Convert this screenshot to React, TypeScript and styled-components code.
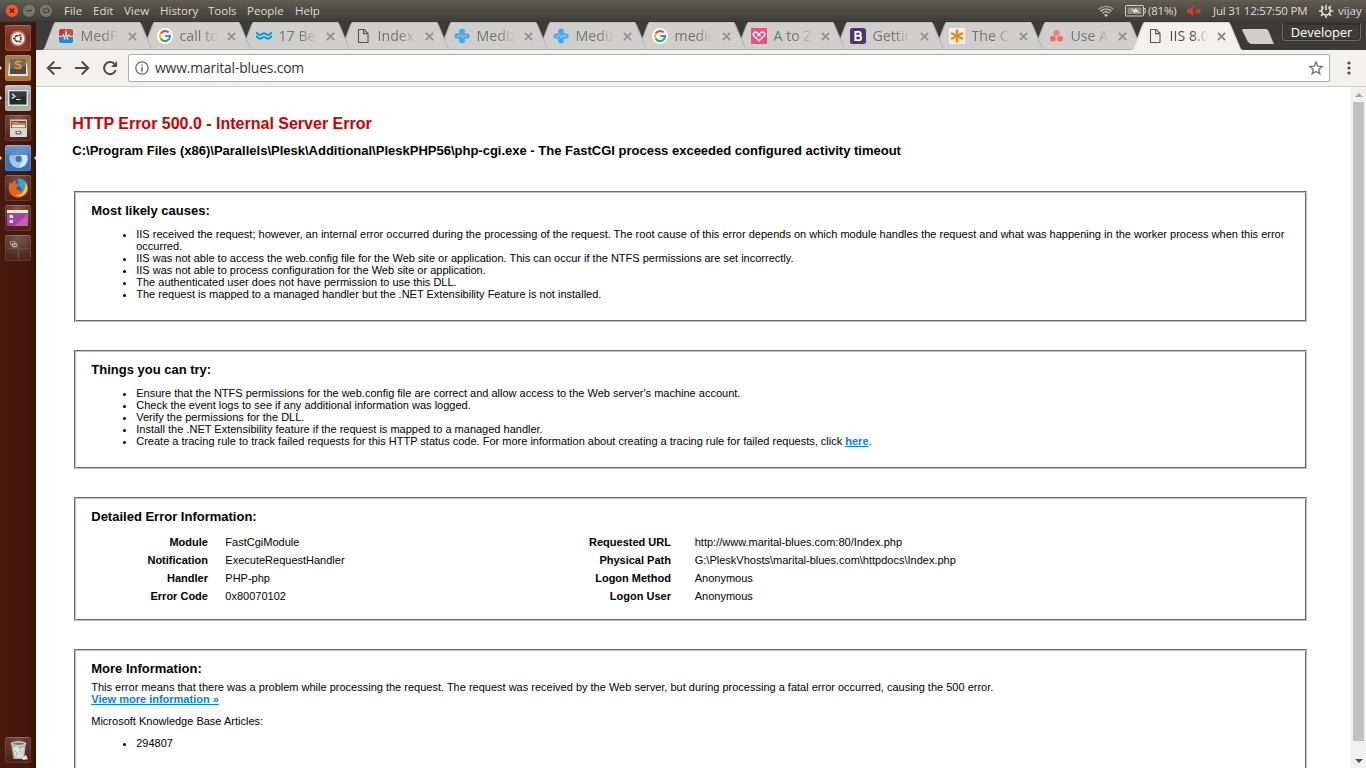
import React from "react";
import styled, { createGlobalStyle, css } from "styled-components";

const GlobalStyle = createGlobalStyle`
  html, body { margin: 0; padding: 0; overflow: hidden; }
  * { box-sizing: border-box; }
  svg { display: block; flex: none; }
`;

const uiFont = `"Open Sans", "Noto Sans", sans-serif`;

const Desktop = styled.div`
  width: 1366px;
  height: 768px;
  display: flex;
  flex-direction: column;
  overflow: hidden;
  background: #fff;
  font-family: ${uiFont};
`;

/* ---------- top panel ---------- */
const Panel = styled.header`
  height: 22px;
  flex: none;
  display: flex;
  align-items: center;
  padding-left: 5px;
  background: linear-gradient(#64614f 0, #5b5850 2px, #3e3d39 21px, #35342f 22px);
  color: #dfdbd2;
  font-size: 11.5px;
  line-height: 22px;
  white-space: nowrap;
`;
const WindowButtons = styled.div`
  display: flex;
  gap: 3px;
  width: 59px;
`;
const MenuItem = styled.span<{ $w: number }>`
  width: ${(p) => p.$w}px;
  flex: none;
`;
const Indicators = styled.div`
  margin-left: auto;
  display: flex;
  align-items: center;
  padding-right: 4px;
`;
const Status = styled.span<{ $w: number; $ml?: number; $ls?: number }>`
  width: ${(p) => p.$w}px;
  margin-left: ${(p) => p.$ml ?? 0}px;
  letter-spacing: ${(p) => p.$ls ?? 0}px;
`;
const IndicatorIcon = styled.span<{ $ml: number }>`
  margin-left: ${(p) => p.$ml}px;
`;

/* ---------- launcher ---------- */
const Workspace = styled.div`
  flex: 1;
  display: flex;
  min-height: 0;
`;
const Launcher = styled.nav`
  width: 36px;
  flex: none;
  display: flex;
  flex-direction: column;
  align-items: center;
  gap: 4px;
  padding: 3px 0 5px;
  background: linear-gradient(90deg, #471a0f, #44180e 70%, #3b130a);
`;
const Tile = styled.div<{ $bg: string; $last?: boolean }>`
  position: relative;
  width: 26px;
  height: 26px;
  flex: none;
  border-radius: 2.5px;
  background: ${(p) => p.$bg};
  box-shadow: inset 0 0 0 1px rgba(255, 255, 255, 0.1), inset 0 1px 0 rgba(255, 255, 255, 0.12);
  ${(p) => p.$last && css`margin-top: auto;`}
`;
const Pip = styled.i<{ $right?: boolean }>`
  position: absolute;
  top: 10.5px;
  border: 2.5px solid transparent;
  ${(p) =>
    p.$right
      ? css`right: -5px; border-right-color: #e6e0dd; border-left-width: 0;`
      : css`left: -5px; border-left-color: #e6e0dd; border-right-width: 0;`}
`;

/* ---------- browser chrome ---------- */
const Browser = styled.div`
  flex: 1;
  display: flex;
  flex-direction: column;
  min-width: 0;
`;
const TabStrip = styled.div`
  height: 28px;
  flex: none;
  display: flex;
  padding-left: 6px;
  background: #3c3b37;
`;
const TabShape = styled.div<{ $active?: boolean; $z: number }>`
  position: relative;
  z-index: ${(p) => p.$z};
  width: 112px;
  height: 28px;
  flex: none;
  margin-right: -13px;
  padding: 0 0 0 16px;
  display: flex;
  align-items: center;
  color: ${(p) => (p.$active ? "#4a4a48" : "#757471")};
  &::before, &::after {
    content: "";
    position: absolute;
    z-index: -1;
    inset: 0;
  }
  &::before {
    background: ${(p) => (p.$active ? "#d8d7d5" : "#b3b1af")};
    clip-path: polygon(0 100%, 2px 96%, 11px 3px, 13px 0, 98px 0, 100px 3px, 110px 96%, 112px 100%);
  }
  &::after {
    background: ${(p) => (p.$active ? "#f2f1f0" : "#d0cfcd")};
    clip-path: ${(p) =>
      p.$active
        ? "polygon(1px 100%, 3px 96%, 12px 4px, 14px 1px, 97px 1px, 99px 4px, 109px 96%, 111px 100%)"
        : "polygon(1px 27px, 3px 26px, 12px 4px, 13px .5px, 98px .5px, 99px 4px, 108.8px 26px, 110px 27px)"};
  }
`;
const TabTitle = styled.span`
  width: 39px;
  margin: 0 8px 0 6.5px;
  overflow: hidden;
  white-space: nowrap;
  font-size: 14.2px;
  line-height: 26px;
  mask-image: linear-gradient(90deg, #000 55%, transparent 98%);
`;
const NewTab = styled.div`
  width: 33px;
  height: 15px;
  margin: 7px 0 0 12px;
  background: #d0cfcd;
  clip-path: polygon(1px 0, 24px 0, 26px 1px, 32px 15px, 9px 15px, 6px 13px, 0 1px);
`;
const ProfileButton = styled.div`
  margin: 1px 5px 0 auto;
  width: 79px;
  height: 18px;
  border: 1px solid #6d6c69;
  border-top-color: #2d2c29;
  border-radius: 0 0 4px 4px;
  box-shadow: inset 0 0 0 1px #32312e;
  color: #fff;
  font-size: 12.9px;
  line-height: 17px;
  text-align: center;
`;
const Toolbar = styled.div`
  height: 37px;
  flex: none;
  display: flex;
  align-items: center;
  padding: 0 0 0 10px;
  background: #f2f1f0;
  border-bottom: 1px solid #cecdcc;
`;
const NavIcons = styled.div`
  display: flex;
  gap: 12px;
  width: 82px;
`;
const AddressBar = styled.div`
  width: 1202px;
  height: 28px;
  flex: none;
  display: flex;
  align-items: center;
  padding: 0 5px;
  background: #fff;
  border: 1px solid #aeadac;
  border-radius: 2px;
`;
const Address = styled.span`
  flex: 1;
  margin-left: 5px;
  color: #333;
  font-size: 13.9px;
  letter-spacing: -0.18px;
  line-height: 26px;
`;
const MenuDots = styled.div`
  width: 36px;
  padding-left: 1px;
  display: flex;
  justify-content: center;
`;
const Viewport = styled.div`
  flex: 1;
  display: flex;
  min-height: 0;
`;
const ScrollTrack = styled.div`
  width: 15px;
  flex: none;
  display: flex;
  flex-direction: column;
  align-items: center;
  background: #f1f1f1;
`;
const ScrollArrow = styled.div<{ $bottom?: boolean }>`
  height: 15px;
  display: flex;
  align-items: center;
  ${(p) => p.$bottom && css`margin-top: auto;`}
`;
const ScrollThumb = styled.div`
  width: 11px;
  height: 639px;
  background: #c1c1c1;
`;

/* ---------- error page ---------- */
const Page = styled.main`
  flex: 1;
  overflow: hidden;
  padding: 27px 44px 0 36px;
  background: #fff;
  color: #000;
  font: 11px/12px "Liberation Sans", Arial, sans-serif;
`;
const ErrorTitle = styled.h2`
  margin: 0;
  padding-left: 0.3px;
  color: #cc0000;
  font-size: 16px;
  line-height: 19px;
`;
const ErrorDetail = styled.h3`
  margin: 10px 0 33px;
  padding-left: 0.3px;
  font-size: 13px;
  line-height: 15px;
`;
const Box = styled.section<{ $h: number }>`
  height: ${(p) => p.$h}px;
  margin: 0 0 28px 2px;
  padding: 11px 16px 0 16.25px;
  border: 1px solid;
  border-color: #6c6c6c #c0c0c0 #c0c0c0 #6c6c6c;
  box-shadow: inset 1px 1px 0 #c0c0c0, inset -1px -1px 0 #6c6c6c;
`;
const BoxTitle = styled.h4`
  margin: 0;
  font-size: 13px;
  line-height: 15px;
`;
const List = styled.ul`
  margin: 10px 0 0;
  padding: 0 0 0 45px;
  list-style: disc;
`;
const Link = styled.a`
  color: #007eff;
  font-weight: bold;
  text-decoration: underline;
`;
const Details = styled.div`
  display: grid;
  grid-template-columns: 117px 312px 117px 1fr;
  column-gap: 17px;
  padding-top: 9px;
  line-height: 18px;
`;
const Label = styled.b`
  padding-right: 0.3px;
  text-align: right;
`;
const Value = styled.span<{ $indent?: boolean }>`
  padding-left: ${(p) => (p.$indent ? 6.5 : 0.1)}px;
`;
const Para = styled.p<{ $mt: number }>`
  margin: ${(p) => p.$mt}px 0 0;
`;

/* ---------- icons ---------- */
const Google = () => (
  <svg width="16" height="16" viewBox="0 0 16 16">
    <circle cx="8" cy="8" r="8" fill="#fff" />
    <g fill="none" strokeWidth="2.1">
      <path d="M11.6 4.6A5 5 0 0 0 3.7 5.5" stroke="#ea4335" />
      <path d="M3.7 5.5a5 5 0 0 0 0 5" stroke="#fbbc05" />
      <path d="M3.7 10.5a5 5 0 0 0 7.5 1.4" stroke="#34a853" />
      <path d="M11.2 11.9A5 5 0 0 0 13 8H8.2" stroke="#4285f4" />
    </g>
  </svg>
);
const Doc = () => (
  <svg width="16" height="16" viewBox="0 0 16 16" fill="none" stroke="#55534f" strokeWidth="1.1">
    <path d="M3.5 1.5h5.7l3.8 3.8v9.200H3.500z" />
    <path d="M8.600 1.800V5.600H12.800" />
  </svg>
);
const Cross = () => (
  <svg width="16" height="16" viewBox="0 0 16 16">
    <g fill="#45aaf0">
      <ellipse cx="8" cy="3.6" rx="2.9" ry="3" />
      <ellipse cx="8" cy="12.4" rx="2.9" ry="3" />
      <ellipse cx="3.6" cy="8" rx="3.2" ry="2.7" />
      <ellipse cx="12.4" cy="8" rx="3.2" ry="2.7" />
      <path d="M5 5h6v6H5z" />
    </g>
    <path d="M3 8.5h2l1.5-2 2 3.5L10 7l1 1h2" fill="none" stroke="#b5d8ee" strokeWidth=".8" />
  </svg>
);
const Pulse = () => (
  <svg width="16" height="16" viewBox="0 0 16 16">
    <path d="M3 1h4.5v7.5H1V3a2 2 0 0 1 2-2z" fill="#d9342b" />
    <path d="M8 1h5a2 2 0 0 1 2 2v5.5H8z" fill="#e04434" />
    <path d="M1 8h14v5a2 2 0 0 1-2 2H3a2 2 0 0 1-2-2z" fill="#2f83c6" />
    <path d="M1 8.300h3.200l1.200-2.300 1.200 5.500L8 3.500l1.300 8L10.600 6l1.200 2.300H15" fill="none" stroke="#e8eef4" strokeWidth="1" />
  </svg>
);
const Waves = () => (
  <svg width="16" height="16" viewBox="0 0 16 16" fill="none" stroke="#139fd3" strokeWidth="2.200">
    <path d="M0 5c2.200 0 2.200 1.900 4 1.900S6 5.300 8 5.300s2.200 1.600 4 1.600S14 5 16 5" />
    <path d="M0 8.700c2.200 0 2.200 1.900 4 1.900S6 9 8 9s2.200 1.600 4 1.600 2-1.900 4-1.900" />
  </svg>
);
const Heart = () => (
  <svg width="16" height="16" viewBox="0 0 16 16">
    <path d="M0 0h16v16H0z" fill="#f04e80" />
    <path d="M6.300 8.300 9.600 5c2.500-2.400 5.600.700 3.400 3L8 12.800 3 8C.9 5.700 4 2.600 6.400 4.900l3.200 3.400" fill="none" stroke="#fff" strokeWidth="1.4" />
  </svg>
);
const BootstrapMark = () => (
  <svg width="16" height="16" viewBox="0 0 16 16">
    <rect width="16" height="16" rx="2.500" fill="#50366f" />
    <path d="M5.400 3.900h3.300c2.700 0 2.700 3.900 0 3.900H5.400zM5.400 7.800h3.500c3 0 3 4.300 0 4.300H5.400z" fill="none" stroke="#fff" strokeWidth="1.900" />
  </svg>
);
const Asterisk = () => (
  <svg width="16" height="16" viewBox="0 0 16 16">
    <path d="M0 0h16v16H0z" fill="#fdeedd" />
    <path d="M8 1.500v13M2 5l12 6M14 5 2 11" stroke="#e58a23" strokeWidth="2.400" />
  </svg>
);
const Dots = () => (
  <svg width="16" height="16" viewBox="0 0 16 16" fill="#f7686c">
    <circle cx="8.500" cy="4.900" r="3" fill="#fa7b66" />
    <circle cx="4.900" cy="10.700" r="2.900" />
    <circle cx="12.100" cy="10.700" r="2.900" />
  </svg>
);
const Close = ({ dark }: { dark?: boolean }) => (
  <svg width="9" height="9" viewBox="0 0 9 9" stroke={dark ? "#7c7b79" : "#8d8c8a"} strokeWidth="1.500">
    <path d="m.9.9 7.200 7.200M8.100.9.9 8.100" />
  </svg>
);
const WinButton = ({ kind }: { kind: "close" | "min" | "max" }) => (
  <svg width="14" height="14" viewBox="0 0 14 14" fill="none">
    <circle cx="7" cy="6.700" r="6.600" fill={kind === "close" ? "#ee5a2b" : "#77756c"} stroke="#34332e" strokeWidth=".5" />
    {kind === "close" && <path d="m4.800 4.500 4.400 4.400m0-4.400L4.800 8.900" stroke="#46200f" strokeWidth="1.200" />}
    {kind === "min" && <path d="M4.300 6.700h5.400" stroke="#3a3934" strokeWidth="1.100" />}
    {kind === "max" && <path d="M4.500 5h5v3.500h-5z" stroke="#3a3934" strokeWidth=".9" />}
  </svg>
);

const tabs = [
  { title: "MedPulse", icon: <Pulse /> },
  { title: "call to", icon: <Google /> },
  { title: "17 Best", icon: <Waves /> },
  { title: "Index", icon: <Doc /> },
  { title: "Medizo", icon: <Cross /> },
  { title: "Medizo", icon: <Cross /> },
  { title: "medic", icon: <Google /> },
  { title: "A to Z", icon: <Heart /> },
  { title: "Getting", icon: <BootstrapMark /> },
  { title: "The Co", icon: <Asterisk /> },
  { title: "Use As", icon: <Dots /> },
  { title: "IIS 8.0", icon: <Doc />, active: true },
];

const menus: [string, number][] = [
  ["File", 29], ["Edit", 31], ["View", 36], ["History", 48], ["Tools", 39], ["People", 48], ["Help", 30],
];

const causes = [
  "IIS received the request; however, an internal error occurred during the processing of the request. The root cause of this error depends on which module handles the request and what was happening in the worker process when this error occurred.",
  "IIS was not able to access the web.config file for the Web site or application. This can occur if the NTFS permissions are set incorrectly.",
  "IIS was not able to process configuration for the Web site or application.",
  "The authenticated user does not have permission to use this DLL.",
  "The request is mapped to a managed handler but the .NET Extensibility Feature is not installed.",
];
const tries = [
  "Ensure that the NTFS permissions for the web.config file are correct and allow access to the Web server's machine account.",
  "Check the event logs to see if any additional information was logged.",
  "Verify the permissions for the DLL.",
  "Install the .NET Extensibility feature if the request is mapped to a managed handler.",
];
const details = [
  ["Module", "FastCgiModule", "Requested URL", "http://www.marital-blues.com:80/Index.php"],
  ["Notification", "ExecuteRequestHandler", "Physical Path", "G:\\PleskVhosts\\marital-blues.com\\httpdocs\\Index.php"],
  ["Handler", "PHP-php", "Logon Method", "Anonymous"],
  ["Error Code", "0x80070102", "Logon User", "Anonymous"],
];

const TopPanel = () => (
  <Panel>
    <WindowButtons>
      <WinButton kind="close" />
      <WinButton kind="min" />
      <WinButton kind="max" />
    </WindowButtons>
    {menus.map(([name, w]) => (
      <MenuItem key={name} $w={w}>{name}</MenuItem>
    ))}
    <Indicators>
      <svg width="18" height="14" viewBox="0 0 18 14" fill="none" stroke="#d6d2c9" strokeWidth="1.200">
        <path d="M1.500 5.200c4.500-3.800 10.500-3.800 15 0" stroke="#a29f96" />
        <path d="M3.500 7.300c3.300-2.900 7.700-2.900 11 0M5.500 9.300c2.100-1.900 4.900-1.900 7 0" />
        <path d="M7.300 11c1-.9 2.400-.9 3.400 0L9 12.700z" fill="#d6d2c9" strokeWidth=".4" />
      </svg>
      <IndicatorIcon $ml={10}>
        <svg width="22" height="12" viewBox="0 0 22 12" fill="none" stroke="#d6d2c9">
          <rect x=".5" y=".5" width="18" height="10.500" rx="1" />
          <path d="M19 3.500h1.200v4.500H19" />
          <path d="M2.500 2.500h14v6.500h-14z" fill="#8e8c84" stroke="none" />
          <path d="m6 3 4 2.500L10.500 3l4 5.200-4-2-.5 2.600z" fill="#f3f0e8" stroke="none" />
        </svg>
      </IndicatorIcon>
      <Status $w={28} $ml={1} $ls={-0.2}>(81%)</Status>
      <IndicatorIcon $ml={10}>
        <svg width="16" height="12" viewBox="0 0 16 12">
          <path d="M1 4h2.500L7 .8v10.400L3.500 8H1z" fill="#e0362c" />
          <path d="m10 4 4.200 4.200m0-4.200L10 8.200" stroke="#d93a2f" strokeWidth="1.700" />
        </svg>
      </IndicatorIcon>
      <Status $w={95} $ml={11} $ls={-0.2}>Jul 31 12:57:50 PM</Status>
      <IndicatorIcon $ml={10}>
        <svg width="16" height="16" viewBox="0 0 16 16" fill="none" stroke="#dfdbd2">
          <path d="M5.600 4.200a4.300 4.300 0 1 0 4.800 0" strokeWidth="1.700" />
          <path d="M8 1.800v5.400" strokeWidth="1.500" />
          <path d="M3.200 3.200 4.700 4.700M12.800 3.200 11.300 4.700M.8 8h2.600M12.600 8h2.600M3 12.800l1.600-1.600M13 12.800l-1.600-1.600M8 12.400V15" strokeWidth="1.700" />
        </svg>
      </IndicatorIcon>
      <Status $w={24} $ml={4}>vijay</Status>
    </Indicators>
  </Panel>
);

const SideLauncher = () => (
  <Launcher>
    <Tile $bg="linear-gradient(#8f4a37, #7a2f1d 50%, #8d3a22)">
      <svg width="26" height="26" viewBox="0 0 26 26" fill="none">
        <circle cx="13" cy="13.500" r="8" fill="#c79b8d" opacity=".65" />
        <circle cx="13" cy="13.500" r="6.300" fill="#fff" />
        <circle cx="13" cy="13.500" r="3" stroke="#71281a" strokeWidth="1.600" />
        <g fill="#71281a" stroke="#fff" strokeWidth=".6">
          <circle cx="9.300" cy="13.500" r="1.400" /><circle cx="15" cy="10.200" r="1.400" /><circle cx="15" cy="16.800" r="1.400" />
        </g>
      </svg>
    </Tile>
    <Tile $bg="linear-gradient(#a57b49, #b98445 60%, #a8702f)">
      <Pip />
      <svg width="26" height="26" viewBox="0 0 26 26">
        <path d="M4 8h18l1 13H3z" fill="#e0dfdb" />
        <path d="M5 4h16v15H5z" fill="#4c4c4c" />
        <path d="M5 4h16v7L5 14z" fill="#6b6b6a" />
        <path d="M16.200 7c-2-1.100-6-.8-5.600 1.200.4 1.800 5.400 1 5.400 3.300 0 2.300-4.300 2.300-6 1" fill="none" stroke="#f39327" strokeWidth="1.900" />
      </svg>
    </Tile>
    <Tile $bg="linear-gradient(#c0c0c0, #9c9a99 50%, #b2b0af)">
      <Pip />
      <svg width="26" height="26" viewBox="0 0 26 26">
        <path d="M3 5h20v16H3z" fill="#e2e2df" />
        <path d="M4.500 6.500h17v13h-17z" fill="#24292a" />
        <path d="M4.500 6.500h17v4l-17 4z" fill="#454a4b" opacity=".7" />
        <path d="m7 9 3 2.300-3 2.300M11 14.500h4.500" fill="none" stroke="#eee" strokeWidth="1.200" />
      </svg>
    </Tile>
    <Tile $bg="radial-gradient(circle at 50% 25%, #896459, #552519 75%)">
      <svg width="26" height="26" viewBox="0 0 26 26">
        <path d="M5 4.500h17V22H5z" fill="#cbc8c3" />
        <path d="M6 6h15v7H6z" fill="#6c5b52" />
        <path d="M7 7h6l1 1h6v5H7z" fill="#ec7b35" />
        <path d="M7 10h13v2H7z" fill="#fff0dc" />
        <path d="M5 13h17v9H5z" fill="#dad8d4" />
        <path d="M10.500 16h6v3.500h-6z" fill="#777671" /><path d="M12 17h3v1h-3z" fill="#fff" />
      </svg>
    </Tile>
    <Tile $bg="linear-gradient(#6f9dcb, #4076b3 50%, #3972b0)">
      <Pip /><Pip $right />
      <svg width="26" height="26" viewBox="0 0 26 26">
        <circle cx="13.500" cy="14" r="8.800" fill="#8fb9e2" />
        <path d="M5 10c3-5.700 13.300-7 17 0h-8.500z" fill="#5c91ca" />
        <path d="M13.500 10H22c2.400 7-2 13-9 12.800l5-7z" fill="#d7e7f5" />
        <path d="M5 10c-2 6 1.700 12 8 12.800l3-5-5-1z" fill="#a5c9ea" />
        <circle cx="13.500" cy="14" r="4" fill="#c4daf0" /><circle cx="13.500" cy="14" r="3.200" fill="#3f73b0" />
      </svg>
    </Tile>
    <Tile $bg="radial-gradient(circle at 50% 20%, #7b5145, #51241a 75%)">
      <svg width="26" height="26" viewBox="0 0 26 26">
        <circle cx="13.500" cy="13" r="9" fill="#2868a9" />
        <path d="M13 4c5-1 9 3 9.500 7l-4 5-5-6z" fill="#36a2d9" />
        <path d="M4.500 7.500 6.500 9c1-2.500 3-3.500 5-3.500-1.300 1.500-1.500 2.500-.5 3.500l3 1-3 3c1 3 5 4 8 1 2-2 1.500-5 .5-7 3.500 3 4 8 1.500 11.500C16 25 6.500 23 4.300 16.500 3.400 13.500 3.700 10 4.500 7.500z" fill="#e8641b" />
        <path d="M20.500 7.500c3 4 2.500 9-1 12-3 2.500-7 2.500-10 .5 6 1 11-2.500 11-12.500z" fill="#ffc83a" />
      </svg>
    </Tile>
    <Tile $bg="radial-gradient(circle at 50% 15%, #80554a, #51241a 75%)">
      <svg width="26" height="26" viewBox="0 0 26 26">
        <path d="M2 5h21v16H2z" fill="#a443a5" />
        <path d="M9 21 23 9v12z" fill="#d36bc1" opacity=".65" />
        <path d="M2 5h21v3H2z" fill="#eae6cd" />
        <path d="M4.500 10H8v3H4.500zM4.500 15H8v3H4.500z" fill="#f0dcef" />
      </svg>
    </Tile>
    <Tile $bg="radial-gradient(circle at 50% 10%, #76594f, #4d271d 80%)">
      <svg width="26" height="26" viewBox="0 0 26 26" fill="none">
        <path d="M13.500 2v22M2 13.500h22" stroke="#6c4e43" />
        <path d="M5.500 6.500H10v3.500H5.500z" stroke="#a4968f" /><path d="M7.500 8.500h4.300V12H7.500z" fill="#8d7b73" stroke="#b8aca6" />
      </svg>
    </Tile>
    <Tile $last $bg="radial-gradient(circle at 50% 15%, #74493c, #502318 80%)">
      <svg width="26" height="26" viewBox="0 0 26 26">
        <path d="M6 6h15l-2 16H8.500z" fill="#b5b5b0" />
        <path d="m8 11 4-2 3 3 4-2-1 10-4 1-4-1z" fill="#e1e1dc" />
        <path d="m10 14 3 3m2-4 2 4m-6 2 2-3" stroke="#b0b0ab" />
        <ellipse cx="13.500" cy="6.500" rx="7.800" ry="2.200" fill="#ddddda" /><ellipse cx="13.500" cy="6.700" rx="6" ry="1.200" fill="#777570" />
        <path d="m17 21 4-3 2 4-5 1z" fill="#e9e8e5" />
      </svg>
    </Tile>
  </Launcher>
);

export default function App() {
  return (
    <Desktop>
      <GlobalStyle />
      <TopPanel />
      <Workspace>
        <SideLauncher />
        <Browser>
          <TabStrip>
            {tabs.map((tab, i) => (
              <TabShape key={i} $active={tab.active} $z={tab.active ? 30 : 20 - i}>
                {tab.icon}
                <TabTitle>{tab.title}</TabTitle>
                <Close dark={tab.active} />
              </TabShape>
            ))}
            <NewTab />
            <ProfileButton>Developer</ProfileButton>
          </TabStrip>
          <Toolbar>
            <NavIcons>
              <svg width="16" height="16" viewBox="0 0 16 16" fill="none" stroke="#4c4c4a" strokeWidth="1.900">
                <path d="M15 8H2M8.300 1.500 1.800 8l6.500 6.500" />
              </svg>
              <svg width="16" height="16" viewBox="0 0 16 16" fill="none" stroke="#4c4c4a" strokeWidth="1.900">
                <path d="M1 8h13M7.700 1.500 14.200 8l-6.500 6.500" />
              </svg>
              <svg width="16" height="16" viewBox="0 0 16 16" fill="none" stroke="#4c4c4a" strokeWidth="2">
                <path d="M13.800 10A6 6 0 1 1 12.300 3.800" />
                <path d="M15 1v6H9z" fill="#4c4c4a" stroke="none" />
              </svg>
            </NavIcons>
            <AddressBar>
              <svg width="16" height="16" viewBox="0 0 16 16" fill="none" stroke="#696967" strokeWidth="1.300">
                <circle cx="8" cy="8" r="6.200" />
                <path d="M8 7v4.400M8 4.400v1.400" strokeWidth="1.500" />
              </svg>
              <Address>www.marital-blues.com</Address>
              <svg width="16" height="16" viewBox="0 0 16 16" fill="none" stroke="#71716f" strokeWidth="1.300">
                <path d="m8 2 1.700 4.200 4.500.3-3.500 2.900 1.200 4.400L8 11.400l-3.900 2.400 1.200-4.400-3.500-2.900 4.500-.3z" />
              </svg>
            </AddressBar>
            <MenuDots>
              <svg width="4" height="16" viewBox="0 0 4 16" fill="#4c4c4a">
                <circle cx="2" cy="3" r="1.600" /><circle cx="2" cy="8" r="1.600" /><circle cx="2" cy="13" r="1.600" />
              </svg>
            </MenuDots>
          </Toolbar>
          <Viewport>
            <Page>
              <ErrorTitle>HTTP Error 500.0 - Internal Server Error</ErrorTitle>
              <ErrorDetail>
                {"C:\\Program Files (x86)\\Parallels\\Plesk\\Additional\\PleskPHP56\\php-cgi.exe - The FastCGI process exceeded configured activity timeout"}
              </ErrorDetail>
              <Box $h={131}>
                <BoxTitle>Most likely causes:</BoxTitle>
                <List>{causes.map((c) => <li key={c}>{c}</li>)}</List>
              </Box>
              <Box $h={119}>
                <BoxTitle>Things you can try:</BoxTitle>
                <List>
                  {tries.map((t) => <li key={t}>{t}</li>)}
                  <li>
                    Create a tracing rule to track failed requests for this HTTP status code. For more information about creating a tracing rule for failed requests, click <Link>here</Link>.
                  </li>
                </List>
              </Box>
              <Box $h={124}>
                <BoxTitle>Detailed Error Information:</BoxTitle>
                <Details>
                  {details.map(([a, b, c, d]) => (
                    <React.Fragment key={a}>
                      <Label>{a}</Label>
                      <Value>{b}</Value>
                      <Label>{c}</Label>
                      <Value $indent>{d}</Value>
                    </React.Fragment>
                  ))}
                </Details>
              </Box>
              <Box $h={160}>
                <BoxTitle>More Information:</BoxTitle>
                <Para $mt={5}>
                  This error means that there was a problem while processing the request. The request was received by the Web server, but during processing a fatal error occurred, causing the 500 error.
                  <br />
                  <Link>View more information »</Link>
                </Para>
                <Para $mt={10}>Microsoft Knowledge Base Articles:</Para>
                <List><li>294807</li></List>
              </Box>
            </Page>
            <ScrollTrack>
              <ScrollArrow>
                <svg width="8" height="4" viewBox="0 0 8 4" fill="#a3a3a3"><path d="M0 4 4 0l4 4z" /></svg>
              </ScrollArrow>
              <ScrollThumb />
              <ScrollArrow $bottom>
                <svg width="8" height="4" viewBox="0 0 8 4" fill="#505050"><path d="M0 0h8L4 4z" /></svg>
              </ScrollArrow>
            </ScrollTrack>
          </Viewport>
        </Browser>
      </Workspace>
    </Desktop>
  );
}
